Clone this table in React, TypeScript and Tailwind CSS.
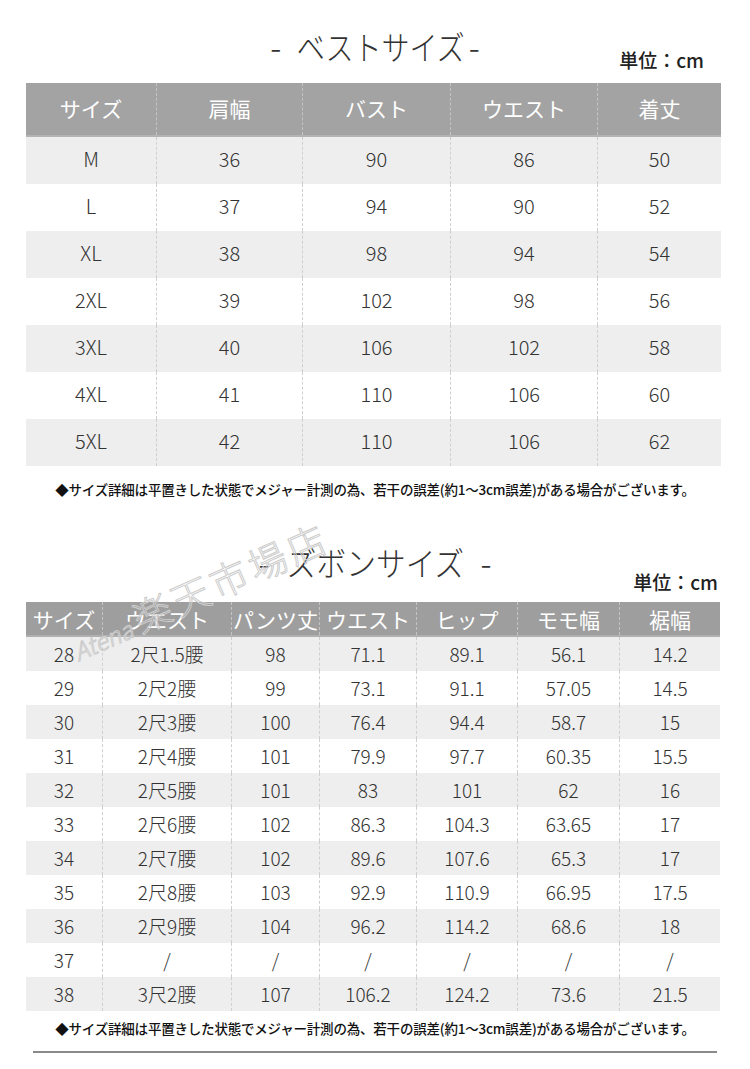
import React from "react";

const font = { fontFamily: '"Noto Sans CJK JP", "Noto Sans", sans-serif' };

const vestHead = ["サイズ", "肩幅", "バスト", "ウエスト", "着丈"];
const vestRows = [
  ["M", "36", "90", "86", "50"],
  ["L", "37", "94", "90", "52"],
  ["XL", "38", "98", "94", "54"],
  ["2XL", "39", "102", "98", "56"],
  ["3XL", "40", "106", "102", "58"],
  ["4XL", "41", "110", "106", "60"],
  ["5XL", "42", "110", "106", "62"],
];
const vestW = ["w-[130px]", "w-[146px]", "w-[148px]", "w-[147px]", "w-[124px]"];

const pantsHead = ["サイズ", "ウエスト", "パンツ丈", "ウエスト", "ヒップ", "モモ幅", "裾幅"];
const pantsRows = [
  ["28", "2尺1.5腰", "98", "71.1", "89.1", "56.1", "14.2"],
  ["29", "2尺2腰", "99", "73.1", "91.1", "57.05", "14.5"],
  ["30", "2尺3腰", "100", "76.4", "94.4", "58.7", "15"],
  ["31", "2尺4腰", "101", "79.9", "97.7", "60.35", "15.5"],
  ["32", "2尺5腰", "101", "83", "101", "62", "16"],
  ["33", "2尺6腰", "102", "86.3", "104.3", "63.65", "17"],
  ["34", "2尺7腰", "102", "89.6", "107.6", "65.3", "17"],
  ["35", "2尺8腰", "103", "92.9", "110.9", "66.95", "17.5"],
  ["36", "2尺9腰", "104", "96.2", "114.2", "68.6", "18"],
  ["37", "/", "/", "/", "/", "/", "/"],
  ["38", "3尺2腰", "107", "106.2", "124.2", "73.6", "21.5"],
];
const pantsW = ["w-[76px]", "w-[129px]", "w-[88px]", "w-[97px]", "w-[101px]", "w-[102px]", "w-[101px]"];

const note =
  "◆サイズ詳細は平置きした状態でメジャー計測の為、若干の誤差(約1～3cm誤差)がある場合がございます。";

export default function App() {
  return (
    <div className="relative w-[750px] h-[1069px] bg-white overflow-hidden" style={font}>
      {/* Vest section */}
      <div className="pt-[26px] grid grid-cols-[1fr_auto_1fr] items-end">
        <div />
        <div className="text-[33px] font-light text-[#333] leading-[40px] whitespace-nowrap">
          <span className="mr-[14px]">-</span>
          <span className="inline-block scale-x-[0.85] -mx-[13px]">ベストサイズ</span>
          <span className="ml-[2px]">-</span>
        </div>
        <div className="flex justify-end pr-[46px]">
          <span className="text-[19px] font-medium text-[#222] leading-[24px] -mb-[6px] whitespace-nowrap">単位：cm</span>
        </div>
      </div>
      <div className="ml-[26px] mt-[17px] w-[695px]">
        <div className="flex h-[54px] bg-[#a3a3a3] border-b-2 border-[#b4b4b4]">
          {vestHead.map((h, i) => (
            <div
              key={i}
              className={`${vestW[i]} flex items-center justify-center text-white text-[21px] ${
                i > 0 ? "border-l border-dashed border-[#c4c4c4]" : ""
              }`}
            >
              {h}
            </div>
          ))}
        </div>
        {vestRows.map((r, ri) => (
          <div key={ri} className={`flex h-[47px] ${ri % 2 === 0 ? "bg-[#eeeeee]" : "bg-white"}`}>
            {r.map((c, i) => (
              <div
                key={i}
                className={`${vestW[i]} flex items-center justify-center pb-[3px] text-[#333] text-[20px] font-light ${
                  i > 0 ? "border-l border-dashed border-[#cfcfcf]" : ""
                }`}
              >
                {c}
              </div>
            ))}
          </div>
        ))}
      </div>
      <div className="mt-[13px] text-center text-[13.5px] leading-[20px] font-medium text-[#111] tracking-[-0.2px] whitespace-nowrap">
        {note}
      </div>

      {/* Pants section */}
      <div className="mt-[43px] grid grid-cols-[1fr_auto_1fr] items-end">
        <div />
        <div className="text-[33px] font-light text-[#333] leading-[40px] whitespace-nowrap">
          <span className="mr-[18px]">-</span>
          <span className="inline-block scale-x-[0.9] -mx-[10px]">ズボンサイズ</span>
          <span className="ml-[16px]">-</span>
        </div>
        <div className="flex justify-end pr-[32px]">
          <span className="text-[19px] font-medium text-[#222] leading-[24px] -mb-[12px] whitespace-nowrap">単位：cm</span>
        </div>
      </div>
      <div className="ml-[26px] mt-[20px] w-[694px]">
        <div className="flex h-[35px] bg-[#9e9e9e] border-b-2 border-[#b0b0b0]">
          {pantsHead.map((h, i) => (
            <div
              key={i}
              className={`${pantsW[i]} flex items-center justify-center text-white text-[21px] leading-[30px] whitespace-nowrap ${
                i > 0 ? "border-l border-dashed border-[#c4c4c4]" : ""
              }`}
            >
              {h}
            </div>
          ))}
        </div>
        {pantsRows.map((r, ri) => (
          <div key={ri} className={`flex h-[34px] ${ri % 2 === 0 ? "bg-[#eeeeee]" : "bg-white"}`}>
            {r.map((c, i) => (
              <div
                key={i}
                className={`${pantsW[i]} flex items-center justify-center text-[#333] text-[19px] font-light whitespace-nowrap ${
                  i > 0 ? "border-l border-dashed border-[#cfcfcf]" : ""
                }`}
              >
                {c}
              </div>
            ))}
          </div>
        ))}
      </div>
      <div className="mt-[7px] text-center text-[13.5px] leading-[20px] font-medium text-[#111] tracking-[-0.2px] whitespace-nowrap">
        {note}
      </div>
      <div className="mx-[33px] mt-[13px] h-[2px] bg-[#8a8a8a]" />

      {/* Watermark overlay */}
      <div className="absolute left-[72px] top-[628px] -rotate-[24deg] origin-left font-light text-transparent [-webkit-text-stroke:1px_#cccccc] whitespace-nowrap pointer-events-none leading-none">
        <span className="text-[24px] italic mr-[6px]">Atena</span>
        <span className="text-[38px] tracking-[4px]">楽天市場店</span>
      </div>
    </div>
  );
}
